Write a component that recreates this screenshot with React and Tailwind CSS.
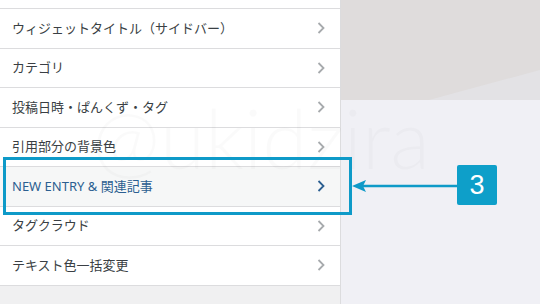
import React from 'react';

const items = [
    'ウィジェットタイトル（サイドバー）',
    'カテゴリ',
    '投稿日時・ぱんくず・タグ',
    '引用部分の背景色',
    'NEW ENTRY & 関連記事',
    'タグクラウド',
    'テキスト色一括変更',
];

const ACTIVE = 4;

function Chevron({ active }) {
    return (
        <svg width="10" height="14" viewBox="0 0 10 14" className="shrink-0">
            <polyline
                points="2.5,2 7.5,7 2.5,12"
                fill="none"
                stroke={active ? '#2c5f91' : '#a7aaad'}
                strokeWidth="1.8"
            />
        </svg>
    );
}

function Row({ label, active }) {
    return (
        <div
            className={`h-[39.5px] flex items-center justify-between pl-3 pr-[14px] border-b border-[#dcdcde] ${active ? 'bg-[#f6f7f7] text-[#2c5f91]' : 'bg-white text-[#3a3f44]'}`}
        >
            <span className="text-[13px] leading-none">{label}</span>
            <Chevron active={active} />
        </div>
    );
}

export default function App() {
    return (
        <div
            className="relative w-[540px] h-[304px] overflow-hidden flex"
            style={{ fontFamily: '"Noto Sans", "Noto Sans CJK JP", sans-serif' }}
        >
            {/* Customizer panel */}
            <div className="w-[341px] h-full bg-[#f0f0f1] border-r border-[#dcdcde] flex flex-col">
                <div className="h-[9px] bg-white border-b border-[#dcdcde] shrink-0" />
                {items.map((label, i) => (
                    <Row key={label} label={label} active={i === ACTIVE} />
                ))}
            </div>

            {/* Preview area */}
            <div className="flex-1 flex flex-col">
                <div className="relative h-[100px] bg-[#dfdcdc]">
                    <svg className="absolute inset-0" width="199" height="100" viewBox="0 0 199 100">
                        <polygon points="88,100 199,70 199,100" fill="#e3e2e5" />
                    </svg>
                </div>
                <div className="flex-1 bg-[#f0f0f5]" />
            </div>

            {/* Watermark */}
            <div
                className="absolute left-[92px] top-[96px] text-[82px] font-light leading-none text-black/[0.02] pointer-events-none select-none"
                style={{ fontFamily: 'Lato, sans-serif' }}
            >
                @ukidzira
            </div>

            {/* Annotation */}
            <div className="absolute left-[3px] top-[157px] w-[349px] h-[58px] border-[3px] border-[#0e9ac8] pointer-events-none" />
            <svg className="absolute left-[350px] top-[178px]" width="110" height="16" viewBox="0 0 110 16">
                <line x1="12" y1="8" x2="108" y2="8" stroke="#0e9ac8" strokeWidth="2.5" />
                <polygon points="2,8 16,2 13,8 16,14" fill="#0e9ac8" />
            </svg>
            <div
                className="absolute left-[457px] top-[165px] w-[40px] h-[40px] rounded-[2px] bg-[#0e9fc9] flex items-center justify-center text-white text-[27px] leading-none"
                style={{ fontFamily: '"Liberation Sans", Arial, sans-serif' }}
            >
                3
            </div>
        </div>
    );
}
